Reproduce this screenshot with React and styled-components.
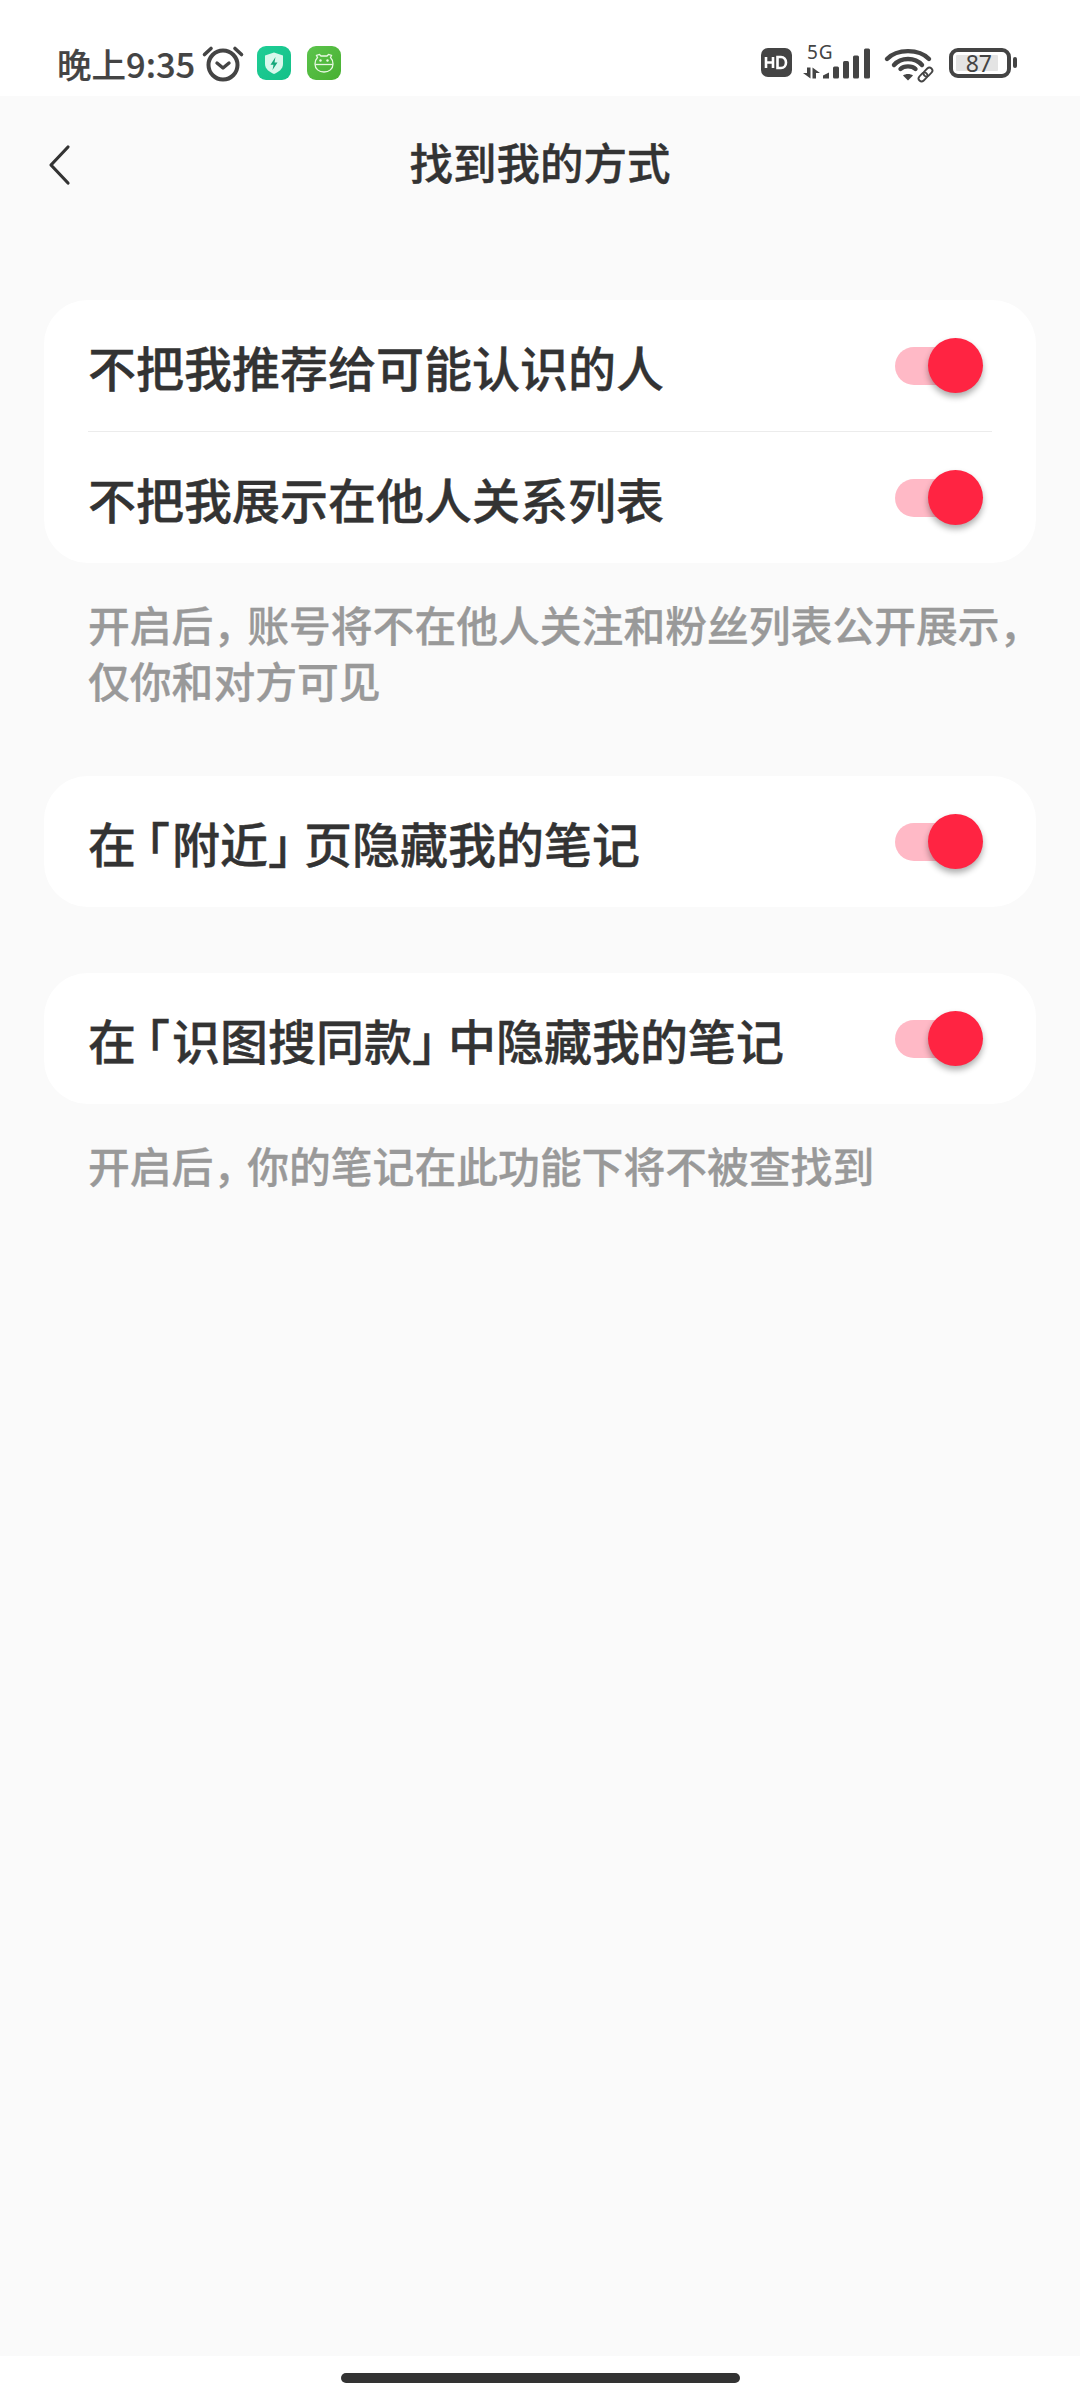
import styled, { createGlobalStyle } from 'styled-components';

const GlobalStyle = createGlobalStyle`
  html, body {
    margin: 0;
    padding: 0;
    background: #fff;
  }
  * {
    box-sizing: border-box;
  }
`;

const Screen = styled.div`
  width: 1080px;
  height: 2400px;
  display: flex;
  flex-direction: column;
  background: #fff;
  font-family: "Noto Sans CJK SC", "Noto Sans", sans-serif;
  overflow: hidden;
`;

const StatusBar = styled.div`
  height: 96px;
  flex-shrink: 0;
  padding: 29px 63px 0 57px;
  display: flex;
  align-items: center;
  justify-content: space-between;
  background: #fff;
  color: #444;
`;

const StatusGroup = styled.div`
  display: flex;
  align-items: center;
`;

const Clock = styled.span`
  font-size: 34.5px;
  font-weight: 500;
  line-height: 40px;
  white-space: nowrap;
  -webkit-text-stroke: 0.2px #444;
`;

const StatusIcon = styled.svg`
  display: block;
  flex-shrink: 0;
  overflow: visible;
  margin-left: ${(props) => props.$gap || 0}px;
`;

const Network = styled.div`
  margin-left: 11px;
  width: 68px;
  height: 36px;
  position: relative;
`;

const FiveG = styled.span`
  position: absolute;
  left: 4px;
  top: -3px;
  font-family: "Noto Sans", sans-serif;
  font-size: 19px;
  letter-spacing: 1px;
  line-height: 20px;
  color: #444;
`;

const Battery = styled.div`
  margin-left: 13px;
  width: 62px;
  height: 30px;
  border: 4px solid #444;
  border-radius: 9px;
  padding: 3px;
  display: flex;
`;

const BatteryLevel = styled.div`
  width: 42px;
  height: 16px;
  border-radius: 1px;
  background: #e4e4e4;
  display: flex;
  align-items: center;
  justify-content: flex-end;
  padding-right: 6px;
  font-family: "Noto Sans", sans-serif;
  font-size: 23px;
  line-height: 16px;
  color: #444;
`;

const BatteryCap = styled.div`
  width: 4px;
  height: 11px;
  margin-left: 2px;
  border-radius: 2px;
  background: #444;
`;

const Page = styled.main`
  flex: 1;
  background: #fafafa;
  display: flex;
  flex-direction: column;
`;

const NavBar = styled.header`
  height: 138px;
  flex-shrink: 0;
  padding-bottom: 6px;
  position: relative;
  display: flex;
  align-items: center;
  justify-content: center;
`;

const BackButton = styled.button`
  position: absolute;
  left: 48px;
  top: 48px;
  padding: 0;
  border: none;
  background: transparent;
  display: flex;
`;

const Title = styled.h1`
  margin: 0;
  font-size: 43.5px;
  font-weight: 500;
  line-height: 60px;
  color: #333;
  -webkit-text-stroke: 0.4px #333;
`;

const Content = styled.div`
  padding: 66px 44px 0;
  display: flex;
  flex-direction: column;
`;

const Card = styled.section`
  background: #fff;
  border-radius: 44px;
  margin-top: ${(props) => props.$top || 0}px;
`;

const Row = styled.div`
  height: 131px;
  padding: 0 53px 0 44px;
  display: flex;
  align-items: center;
  justify-content: space-between;
`;

const Label = styled.span`
  font-size: 48px;
  font-weight: 500;
  line-height: 60px;
  color: #333;
  white-space: nowrap;
  -webkit-text-stroke: 0.4px #333;
`;

// halt trims the brackets to half width, the margins put back the gap around them
const Bracket = styled.span`
  font-feature-settings: "halt";
  margin-left: ${(props) => props.$lead || 0}px;
  margin-right: ${(props) => props.$trail || 0}px;
`;

const Divider = styled.div`
  height: 1px;
  margin: 0 44px;
  background: #ececec;
`;

const Switch = styled.div`
  width: 88px;
  height: 55px;
  position: relative;
  flex-shrink: 0;
`;

const Track = styled.div`
  position: absolute;
  left: 0;
  top: 9px;
  width: 60px;
  height: 38px;
  border-radius: 19px 0 0 19px;
  background: #ffb9c6;
`;

const Knob = styled.div`
  position: absolute;
  right: 0;
  top: 0;
  width: 55px;
  height: 55px;
  border-radius: 50%;
  background: #ff2442;
  box-shadow: 0 4px 6px rgba(0, 0, 0, 0.32);
`;

const Note = styled.p`
  margin: 33px 0 0;
  padding-left: 44px;
  font-size: 41.8px;
  font-weight: 500;
  line-height: 56px;
  color: #999;
  white-space: nowrap;
  -webkit-text-stroke: 0.3px #999;
`;

const Comma = styled.span`
  letter-spacing: -8px;
`;

const HomeArea = styled.div`
  height: 44px;
  flex-shrink: 0;
  padding-top: 17px;
  display: flex;
  justify-content: center;
  background: #fff;
`;

const HomeBar = styled.div`
  width: 399px;
  height: 10px;
  border-radius: 5px;
  background: #333;
`;

function AlarmIcon() {
  return (
    <StatusIcon $gap={7} width="42" height="38" viewBox="0 0 42 38" fill="none" stroke="#444">
      <circle cx="21" cy="21" r="14.5" strokeWidth="4" />
      <path d="M15 19l6 5 6-5" strokeWidth="3.4" strokeLinecap="round" strokeLinejoin="round" />
      <path d="M2.5 10.5 9 4.5M39.5 10.5 33 4.5" strokeWidth="3.6" strokeLinecap="round" />
    </StatusIcon>
  );
}

function ShieldApp() {
  return (
    <StatusIcon $gap={13} width="34" height="34" viewBox="0 0 34 34">
      <defs>
        <linearGradient id="shieldBg" x1="0" y1="0" x2="1" y2="1">
          <stop offset="0" stopColor="#1fce96" />
          <stop offset="1" stopColor="#14c088" />
        </linearGradient>
      </defs>
      <rect width="34" height="34" rx="9" fill="url(#shieldBg)" />
      <path d="M17 6.500 26 9.500V18C26 23 21.500 26 17 28 12.500 26 8 23 8 18V9.500Z" fill="#d8f8ec" />
      <path d="M18.500 11 13.500 18.800H16.500L15.500 24 20.500 16.500H17.500Z" fill="#14a87a" />
    </StatusIcon>
  );
}

function MascotApp() {
  return (
    <StatusIcon $gap={16} width="34" height="34" viewBox="0 0 34 34">
      <defs>
        <linearGradient id="mascotBg" x1="0" y1="0" x2="1" y2="1">
          <stop offset="0" stopColor="#5cc44c" />
          <stop offset="1" stopColor="#48b032" />
        </linearGradient>
      </defs>
      <rect width="34" height="34" rx="9" fill="url(#mascotBg)" />
      <g fill="none" stroke="#e9f8e4" strokeWidth="1.300">
        <path d="M10.500 11.500 9.500 9.500 12.500 8.500 14 10H20L21.500 8.500 24.500 9.500 23.500 11.500C25.500 13.500 26 15.500 26 18 26 23 22 26 17 26 12 26 8 23 8 18 8 15.500 8.500 13.500 10.500 11.500Z" />
        <path d="M8.300 18.500H25.700" />
      </g>
      <circle cx="13.500" cy="14.500" r="1.200" fill="#e9f8e4" />
      <circle cx="20.500" cy="14.500" r="1.200" fill="#e9f8e4" />
    </StatusIcon>
  );
}

function HdIcon() {
  return (
    <StatusIcon width="31" height="29" viewBox="0 0 31 29">
      <rect width="31" height="29" rx="7" fill="#444" />
      <path
        d="M5 9v11M5 14.500h7M12 9v11M16.500 9v11h3.500c3 0 5-2.200 5-5.500S23 9 20 9z"
        fill="none"
        stroke="#fff"
        strokeWidth="2.600"
      />
    </StatusIcon>
  );
}

function SignalBars() {
  return (
    <svg
      width="68"
      height="36"
      viewBox="0 0 68 36"
      style={{ position: 'absolute', left: 0, top: 0 }}
    >
      <path d="M0 28H4V22.500H7.500V33.500Z" fill="#444" />
      <path d="M9.500 22.500V33.500H13V28H17Z" fill="#444" />
      <path d="M20 33.500V30.500L26 27.500V33.500Z" fill="#444" />
      <rect x="30" y="21.500" width="6" height="12" rx="1.500" fill="#444" />
      <rect x="40" y="16" width="6" height="17.500" rx="1.500" fill="#444" />
      <rect x="50" y="10.500" width="6" height="23" rx="1.500" fill="#444" />
      <rect x="61" y="3.500" width="6" height="30" rx="1.500" fill="#444" />
    </svg>
  );
}

function WifiIcon() {
  return (
    <StatusIcon $gap={13} width="52" height="36" viewBox="0 0 52 36" fill="none">
      <path d="M3 14C13 3.500 35 3.500 45 14" stroke="#444" strokeWidth="4.400" strokeLinecap="round" />
      <path d="M10 20C17 12 31 12 38 20" stroke="#444" strokeWidth="4.400" strokeLinecap="round" />
      <path d="M16.500 24C20 20.500 28 20.500 31.500 24" stroke="#444" strokeWidth="4.400" strokeLinecap="round" />
      <path d="M24 35.500 19 30.500C21.500 28.500 26.500 28.500 29 30.500Z" fill="#444" />
      <g stroke="#444" strokeWidth="1.800" transform="rotate(-45 41.500 29.500)">
        <rect x="33" y="26.500" width="10" height="6" rx="3" />
        <rect x="40" y="26.500" width="10" height="6" rx="3" />
      </g>
    </StatusIcon>
  );
}

function ToggleSwitch() {
  return (
    <Switch>
      <Track />
      <Knob />
    </Switch>
  );
}

function App() {
  return (
    <Screen>
      <GlobalStyle />
      <StatusBar>
        <StatusGroup>
          <Clock>晚上9:35</Clock>
          <AlarmIcon />
          <ShieldApp />
          <MascotApp />
        </StatusGroup>
        <StatusGroup>
          <HdIcon />
          <Network>
            <FiveG>5G</FiveG>
            <SignalBars />
          </Network>
          <WifiIcon />
          <Battery>
            <BatteryLevel>87</BatteryLevel>
          </Battery>
          <BatteryCap />
        </StatusGroup>
      </StatusBar>
      <Page>
        <NavBar>
          <BackButton>
            <svg width="24" height="42" viewBox="0 0 24 42" fill="none">
              <path d="M20 3 3 21l17 18" stroke="#333" strokeWidth="3.200" strokeLinecap="round" strokeLinejoin="round" />
            </svg>
          </BackButton>
          <Title>找到我的方式</Title>
        </NavBar>
        <Content>
          <Card>
            <Row>
              <Label>不把我推荐给可能认识的人</Label>
              <ToggleSwitch />
            </Row>
            <Divider />
            <Row>
              <Label>不把我展示在他人关系列表</Label>
              <ToggleSwitch />
            </Row>
          </Card>
          <Note>
            开启后<Comma>，</Comma>账号将不在他人关注和粉丝列表公开展示<Comma>，</Comma>
            <br />
            仅你和对方可见
          </Note>
          <Card $top={68}>
            <Row>
              <Label>
                在<Bracket $lead={10} $trail={2}>「</Bracket>附近<Bracket $trail={12}>」</Bracket>页隐藏我的笔记
              </Label>
              <ToggleSwitch />
            </Row>
          </Card>
          <Card $top={66}>
            <Row>
              <Label>
                在<Bracket $lead={10} $trail={2}>「</Bracket>识图搜同款<Bracket $trail={12}>」</Bracket>中隐藏我的笔记
              </Label>
              <ToggleSwitch />
            </Row>
          </Card>
          <Note>
            开启后<Comma>，</Comma>你的笔记在此功能下将不被查找到
          </Note>
        </Content>
      </Page>
      <HomeArea>
        <HomeBar />
      </HomeArea>
    </Screen>
  );
}

export default App;
